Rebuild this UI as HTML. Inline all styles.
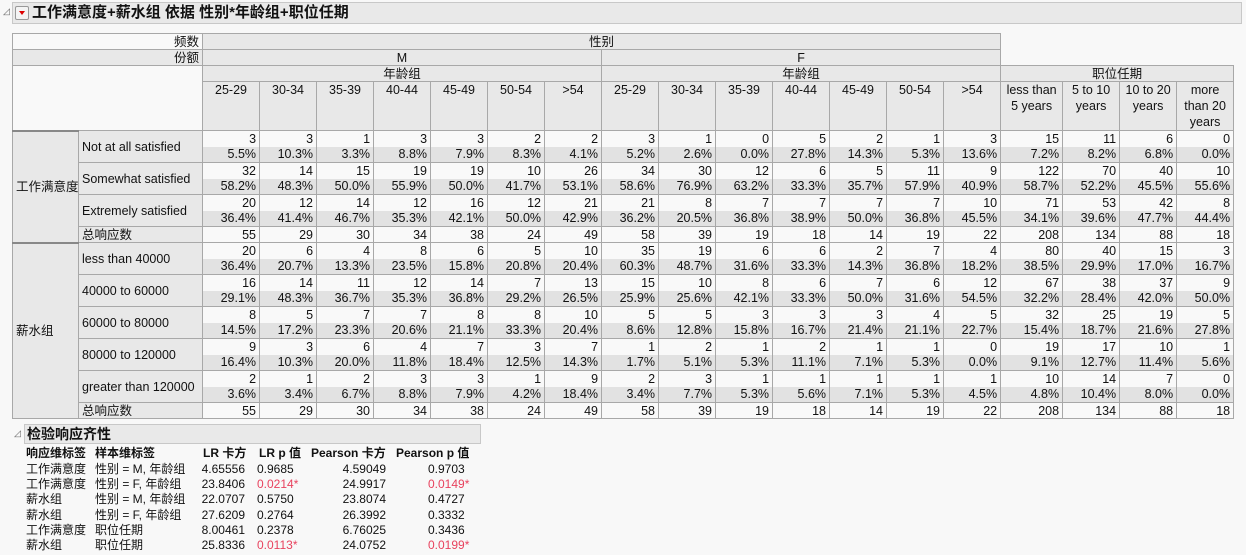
<!DOCTYPE html><html><head><meta charset="utf-8"><style>
body{margin:0;width:1246px;height:555px;background:#f8f8f8;font-family:"Liberation Sans","Noto Sans CJK SC",sans-serif;font-size:12px;color:#111;position:relative;overflow:hidden}
.title{position:absolute;left:12px;top:2px;width:1228px;height:20px;background:#e9e9e9;border:1px solid #c8c8c8;font-weight:bold;font-size:15px;line-height:20px}
.tri{position:absolute;left:2px;font-size:9px;color:#666}
.btn{position:absolute;left:2px;top:3px;width:12px;height:12px;border:1px solid #999;border-radius:2px;background:#f4f4f4}
.btn:after{content:"";position:absolute;left:3px;top:4px;border-left:3px solid transparent;border-right:3px solid transparent;border-top:4px solid #d00}
table.m{position:absolute;left:12px;top:33px;width:1221px;border-collapse:collapse;table-layout:fixed;font-size:12.5px}
table.m tr{height:16px}
table.m td{padding:0 3px;border:1px solid #a8a8a8;line-height:14px;white-space:nowrap;overflow:hidden;text-align:right;background:#f9f9f9}
table.m td.g{background:#e8e8e8;text-align:center}
table.m td.h{background:#e8e8e8;text-align:center;vertical-align:top;white-space:normal;line-height:16px;padding:0 2px}
table.m td.lb{background:#e8e8e8;text-align:left;padding:0 1px 0 3px}
table.m td.n{border:none;background:#f8f8f8}
table.m tr.p td{background:#e2e2e2;border-top:none}
table.m tr.c td{border-bottom:none}
table.m tr.p td.lb,table.m tr.c td.lb{border-bottom:1px solid #a8a8a8}
.t2{position:absolute;left:24px;top:424px;width:453px;height:18px;background:#e9e9e9;border:1px solid #c8c8c8;font-weight:bold;font-size:14px;line-height:18px;padding-left:2px}
.r{position:absolute;font-size:12px;line-height:15.2px;white-space:nowrap}
.red{color:#e8425e}
</style></head><body>
<div class="tri" style="left:3px;top:6px">◿</div>
<div class="title"><div class="btn"></div><span style="position:absolute;left:19px">工作满意度+薪水组 依据 性别*年龄组+职位任期</span></div>
<table class="m">
<colgroup><col style="width:66px"><col style="width:124px"><col span="14" style="width:57px"><col style="width:62px"><col span="3" style="width:57px"></colgroup>
<tr><td colspan="2" style="background:#f9f9f9;border-bottom:none">频数</td><td colspan="14" class="g">性别</td><td colspan="4" class="n"></td></tr>
<tr><td colspan="2" class="g" style="text-align:right">份额</td><td colspan="7" class="g">M</td><td colspan="7" class="g">F</td><td colspan="4" class="n"></td></tr>
<tr><td colspan="2" rowspan="2" style="background:#f9f9f9"></td><td colspan="7" class="g">年龄组</td><td colspan="7" class="g">年龄组</td><td colspan="4" class="g">职位任期</td></tr>
<tr style="height:47px"><td class="h">25-29</td><td class="h">30-34</td><td class="h">35-39</td><td class="h">40-44</td><td class="h">45-49</td><td class="h">50-54</td><td class="h">&gt;54</td><td class="h">25-29</td><td class="h">30-34</td><td class="h">35-39</td><td class="h">40-44</td><td class="h">45-49</td><td class="h">50-54</td><td class="h">&gt;54</td><td class="h">less than 5 years</td><td class="h">5 to 10 years</td><td class="h">10 to 20 years</td><td class="h">more than 20 years</td></tr>
<tr class="c"><td rowspan="7" class="lb" style="border-top:2px solid #888">工作满意度</td><td rowspan="2" class="lb">Not at all satisfied</td><td>3</td><td>3</td><td>1</td><td>3</td><td>3</td><td>2</td><td>2</td><td>3</td><td>1</td><td>0</td><td>5</td><td>2</td><td>1</td><td>3</td><td>15</td><td>11</td><td>6</td><td>0</td></tr>
<tr class="p"><td>5.5%</td><td>10.3%</td><td>3.3%</td><td>8.8%</td><td>7.9%</td><td>8.3%</td><td>4.1%</td><td>5.2%</td><td>2.6%</td><td>0.0%</td><td>27.8%</td><td>14.3%</td><td>5.3%</td><td>13.6%</td><td>7.2%</td><td>8.2%</td><td>6.8%</td><td>0.0%</td></tr>
<tr class="c"><td rowspan="2" class="lb">Somewhat satisfied</td><td>32</td><td>14</td><td>15</td><td>19</td><td>19</td><td>10</td><td>26</td><td>34</td><td>30</td><td>12</td><td>6</td><td>5</td><td>11</td><td>9</td><td>122</td><td>70</td><td>40</td><td>10</td></tr>
<tr class="p"><td>58.2%</td><td>48.3%</td><td>50.0%</td><td>55.9%</td><td>50.0%</td><td>41.7%</td><td>53.1%</td><td>58.6%</td><td>76.9%</td><td>63.2%</td><td>33.3%</td><td>35.7%</td><td>57.9%</td><td>40.9%</td><td>58.7%</td><td>52.2%</td><td>45.5%</td><td>55.6%</td></tr>
<tr class="c"><td rowspan="2" class="lb">Extremely satisfied</td><td>20</td><td>12</td><td>14</td><td>12</td><td>16</td><td>12</td><td>21</td><td>21</td><td>8</td><td>7</td><td>7</td><td>7</td><td>7</td><td>10</td><td>71</td><td>53</td><td>42</td><td>8</td></tr>
<tr class="p"><td>36.4%</td><td>41.4%</td><td>46.7%</td><td>35.3%</td><td>42.1%</td><td>50.0%</td><td>42.9%</td><td>36.2%</td><td>20.5%</td><td>36.8%</td><td>38.9%</td><td>50.0%</td><td>36.8%</td><td>45.5%</td><td>34.1%</td><td>39.6%</td><td>47.7%</td><td>44.4%</td></tr>
<tr><td class="lb">总响应数</td><td>55</td><td>29</td><td>30</td><td>34</td><td>38</td><td>24</td><td>49</td><td>58</td><td>39</td><td>19</td><td>18</td><td>14</td><td>19</td><td>22</td><td>208</td><td>134</td><td>88</td><td>18</td></tr>
<tr class="c"><td rowspan="11" class="lb" style="border-top:2px solid #888">薪水组</td><td rowspan="2" class="lb">less than 40000</td><td>20</td><td>6</td><td>4</td><td>8</td><td>6</td><td>5</td><td>10</td><td>35</td><td>19</td><td>6</td><td>6</td><td>2</td><td>7</td><td>4</td><td>80</td><td>40</td><td>15</td><td>3</td></tr>
<tr class="p"><td>36.4%</td><td>20.7%</td><td>13.3%</td><td>23.5%</td><td>15.8%</td><td>20.8%</td><td>20.4%</td><td>60.3%</td><td>48.7%</td><td>31.6%</td><td>33.3%</td><td>14.3%</td><td>36.8%</td><td>18.2%</td><td>38.5%</td><td>29.9%</td><td>17.0%</td><td>16.7%</td></tr>
<tr class="c"><td rowspan="2" class="lb">40000 to 60000</td><td>16</td><td>14</td><td>11</td><td>12</td><td>14</td><td>7</td><td>13</td><td>15</td><td>10</td><td>8</td><td>6</td><td>7</td><td>6</td><td>12</td><td>67</td><td>38</td><td>37</td><td>9</td></tr>
<tr class="p"><td>29.1%</td><td>48.3%</td><td>36.7%</td><td>35.3%</td><td>36.8%</td><td>29.2%</td><td>26.5%</td><td>25.9%</td><td>25.6%</td><td>42.1%</td><td>33.3%</td><td>50.0%</td><td>31.6%</td><td>54.5%</td><td>32.2%</td><td>28.4%</td><td>42.0%</td><td>50.0%</td></tr>
<tr class="c"><td rowspan="2" class="lb">60000 to 80000</td><td>8</td><td>5</td><td>7</td><td>7</td><td>8</td><td>8</td><td>10</td><td>5</td><td>5</td><td>3</td><td>3</td><td>3</td><td>4</td><td>5</td><td>32</td><td>25</td><td>19</td><td>5</td></tr>
<tr class="p"><td>14.5%</td><td>17.2%</td><td>23.3%</td><td>20.6%</td><td>21.1%</td><td>33.3%</td><td>20.4%</td><td>8.6%</td><td>12.8%</td><td>15.8%</td><td>16.7%</td><td>21.4%</td><td>21.1%</td><td>22.7%</td><td>15.4%</td><td>18.7%</td><td>21.6%</td><td>27.8%</td></tr>
<tr class="c"><td rowspan="2" class="lb">80000 to 120000</td><td>9</td><td>3</td><td>6</td><td>4</td><td>7</td><td>3</td><td>7</td><td>1</td><td>2</td><td>1</td><td>2</td><td>1</td><td>1</td><td>0</td><td>19</td><td>17</td><td>10</td><td>1</td></tr>
<tr class="p"><td>16.4%</td><td>10.3%</td><td>20.0%</td><td>11.8%</td><td>18.4%</td><td>12.5%</td><td>14.3%</td><td>1.7%</td><td>5.1%</td><td>5.3%</td><td>11.1%</td><td>7.1%</td><td>5.3%</td><td>0.0%</td><td>9.1%</td><td>12.7%</td><td>11.4%</td><td>5.6%</td></tr>
<tr class="c"><td rowspan="2" class="lb">greater than 120000</td><td>2</td><td>1</td><td>2</td><td>3</td><td>3</td><td>1</td><td>9</td><td>2</td><td>3</td><td>1</td><td>1</td><td>1</td><td>1</td><td>1</td><td>10</td><td>14</td><td>7</td><td>0</td></tr>
<tr class="p"><td>3.6%</td><td>3.4%</td><td>6.7%</td><td>8.8%</td><td>7.9%</td><td>4.2%</td><td>18.4%</td><td>3.4%</td><td>7.7%</td><td>5.3%</td><td>5.6%</td><td>7.1%</td><td>5.3%</td><td>4.5%</td><td>4.8%</td><td>10.4%</td><td>8.0%</td><td>0.0%</td></tr>
<tr><td class="lb">总响应数</td><td>55</td><td>29</td><td>30</td><td>34</td><td>38</td><td>24</td><td>49</td><td>58</td><td>39</td><td>19</td><td>18</td><td>14</td><td>19</td><td>22</td><td>208</td><td>134</td><td>88</td><td>18</td></tr>
</table>
<div class="tri" style="left:14px;top:428px">◿</div>
<div class="t2">检验响应齐性</div>
<div class="r" style="left:26px;top:446px;font-weight:bold">响应维标签</div>
<div class="r" style="left:95px;top:446px;font-weight:bold">样本维标签</div>
<div class="r" style="left:203px;top:446px;font-weight:bold">LR 卡方</div>
<div class="r" style="left:259px;top:446px;font-weight:bold">LR p 值</div>
<div class="r" style="left:311px;top:446px;font-weight:bold">Pearson 卡方</div>
<div class="r" style="left:396px;top:446px;font-weight:bold">Pearson p 值</div>
<div class="r" style="left:26px;top:462px">工作满意度<br>工作满意度<br>薪水组<br>薪水组<br>工作满意度<br>薪水组</div>
<div class="r" style="left:95px;top:462px">性别 = M, 年龄组<br>性别 = F, 年龄组<br>性别 = M, 年龄组<br>性别 = F, 年龄组<br>职位任期<br>职位任期</div>
<div class="r" style="left:200px;top:462px;width:45px;text-align:right">4.65556<br>23.8406<br>22.0707<br>27.6209<br>8.00461<br>25.8336</div>
<div class="r" style="left:257px;top:462px">0.9685<br><span class="red">0.0214*</span><br>0.5750<br>0.2764<br>0.2378<br><span class="red">0.0113*</span></div>
<div class="r" style="left:330px;top:462px;width:56px;text-align:right">4.59049<br>24.9917<br>23.8074<br>26.3992<br>6.76025<br>24.0752</div>
<div class="r" style="left:428px;top:462px">0.9703<br><span class="red">0.0149*</span><br>0.4727<br>0.3332<br>0.3436<br><span class="red">0.0199*</span></div>
</body></html>
